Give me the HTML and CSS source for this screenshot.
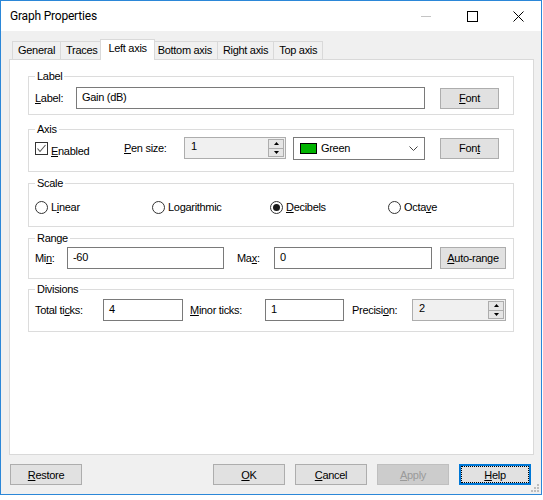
FILE: index.html
```html
<!DOCTYPE html>
<html>
<head>
<meta charset="utf-8">
<title>Graph Properties</title>
<link rel="stylesheet" href="styles.css">
</head>
<body>
<div class="window">
  <div class="titlebar">
    <span class="title">Graph Properties</span>
    <div class="caption">
      <div class="cap-btn"><svg width="10" height="10" viewBox="0 0 10 10"><line x1="0" y1="5.5" x2="10" y2="5.5" stroke="#c4c4c4" stroke-width="1"/></svg></div>
      <div class="cap-btn"><svg width="11" height="11" viewBox="0 0 11 11"><rect x="0.5" y="0.5" width="10" height="10" fill="none" stroke="#000" stroke-width="1"/></svg></div>
      <div class="cap-btn"><svg width="11" height="11" viewBox="0 0 11 11"><path d="M0.5 0.5 L10.5 10.5 M10.5 0.5 L0.5 10.5" stroke="#000" stroke-width="1" fill="none"/></svg></div>
    </div>
  </div>
  <div class="body">
    <div class="tabs">
      <div class="tab">General</div>
      <div class="tab">Traces</div>
      <div class="tab active">Left axis</div>
      <div class="tab">Bottom axis</div>
      <div class="tab">Right axis</div>
      <div class="tab">Top axis</div>
    </div>
    <div class="panel">
      <fieldset class="group g-label">
        <legend>Label</legend>
        <div class="row">
          <span class="lab w41"><u>L</u>abel:</span>
          <div class="field w349">Gain (dB)</div>
          <div class="btn w59 ml15"><u>F</u>ont</div>
        </div>
      </fieldset>
      <fieldset class="group g-axis">
        <legend>Axis</legend>
        <div class="row">
          <div class="check-wrap">
            <span class="checkbox"><svg width="11" height="11" viewBox="0 0 11 11"><polyline points="1.5,5.5 4,8.5 9.5,2" fill="none" stroke="#555" stroke-width="1.1"/></svg></span>
            <span class="check-text"><u>E</u>nabled</span>
          </div>
          <span class="lab w60"><u>P</u>en size:</span>
          <div class="spin w102">
            <span class="spin-val">1</span>
            <div class="spin-btns">
              <div class="sb"><svg width="5" height="3" viewBox="0 0 5 3"><polygon points="0,3 5,3 2.5,0" fill="#000"/></svg></div>
              <div class="sb"><svg width="5" height="3" viewBox="0 0 5 3"><polygon points="0,0 5,0 2.5,3" fill="#000"/></svg></div>
            </div>
          </div>
          <div class="combo">
            <span class="swatch"></span>
            <span>Green</span>
            <svg class="chev" width="9" height="5" viewBox="0 0 9 5"><polyline points="0.5,0.5 4.5,4.5 8.5,0.5" fill="none" stroke="#444" stroke-width="1"/></svg>
          </div>
          <div class="btn w59 ml15">Fon<u>t</u></div>
        </div>
      </fieldset>
      <fieldset class="group g-scale">
        <legend>Scale</legend>
        <div class="radio-row">
          <div class="radio-item"><span class="radio"></span><span>L<u>i</u>near</span></div>
          <div class="radio-item"><span class="radio"></span><span>Lo<u>g</u>arithmic</span></div>
          <div class="radio-item"><span class="radio on"></span><span><u>D</u>ecibels</span></div>
          <div class="radio-item"><span class="radio"></span><span>Octa<u>v</u>e</span></div>
        </div>
      </fieldset>
      <fieldset class="group g-range">
        <legend>Range</legend>
        <div class="row">
          <span class="lab w32">Mi<u>n</u>:</span>
          <div class="field w157">-60</div>
          <span class="lab w37 ml13">Ma<u>x</u>:</span>
          <div class="field w158">0</div>
          <div class="btn w66 h22 ml8"><u>A</u>uto-range</div>
        </div>
      </fieldset>
      <fieldset class="group g-div">
        <legend>Divisions</legend>
        <div class="row">
          <span class="lab w68">Total ti<u>c</u>ks:</span>
          <div class="field w80">4</div>
          <span class="lab w75 ml7"><u>M</u>inor ticks:</span>
          <div class="field w79">1</div>
          <span class="lab w60 ml8">Precisi<u>o</u>n:</span>
          <div class="spin w94">
            <span class="spin-val">2</span>
            <div class="spin-btns">
              <div class="sb"><svg width="5" height="3" viewBox="0 0 5 3"><polygon points="0,3 5,3 2.5,0" fill="#000"/></svg></div>
              <div class="sb"><svg width="5" height="3" viewBox="0 0 5 3"><polygon points="0,0 5,0 2.5,3" fill="#000"/></svg></div>
            </div>
          </div>
        </div>
      </fieldset>
    </div>
    <div class="buttons">
      <div class="btn w72"><u>R</u>estore</div>
      <div class="btn w72 push"><u>O</u>K</div>
      <div class="btn w72 ml10"><u>C</u>ancel</div>
      <div class="btn w72 ml10 disabled"><u>A</u>pply</div>
      <div class="btn w72 ml10 default"><u>H</u>elp</div>
    </div>
  </div>
  <svg class="grip" width="10" height="10" viewBox="0 0 10 10">
    <rect x="7" y="1" width="2" height="2" fill="#bdbdbd"/>
    <rect x="4" y="4" width="2" height="2" fill="#bdbdbd"/>
    <rect x="7" y="4" width="2" height="2" fill="#bdbdbd"/>
    <rect x="1" y="7" width="2" height="2" fill="#bdbdbd"/>
    <rect x="4" y="7" width="2" height="2" fill="#bdbdbd"/>
    <rect x="7" y="7" width="2" height="2" fill="#bdbdbd"/>
  </svg>
</div>
</body>
</html>
```

FILE: styles.css
```css
* { box-sizing: border-box; }

body {
  margin: 0;
  background: #ffffff;
  font-family: "Liberation Sans", Arial, sans-serif;
  font-size: 11px;
  letter-spacing: -0.3px;
  color: #000;
}

u { text-decoration: underline; text-underline-offset: 1px; }

.window {
  position: relative;
  width: 542px;
  height: 495px;
  border: 1px solid #2b87d8;
  background: #f0f0f0;
}

.titlebar {
  height: 30px;
  background: #fff;
  display: flex;
  align-items: center;
}

.title {
  font-family: Roboto, "Noto Sans", sans-serif;
  font-size: 12px;
  letter-spacing: -0.2px;
  margin-left: 9px;
  color: #000;
}

.caption { margin-left: auto; display: flex; }

.cap-btn {
  width: 46px;
  height: 30px;
  display: flex;
  align-items: center;
  justify-content: center;
}

.body { padding: 0 7px 0 8px; }

.tabs {
  display: flex;
  align-items: flex-end;
  height: 20px;
  margin-top: 8px;
  padding-left: 3px;
}

.tab {
  height: 18px;
  padding: 0 5px;
  border: 1px solid #d9d9d9;
  border-bottom: none;
  line-height: 17px;
  background: #f0f0f0;
  margin-left: -1px;
}

.tab:first-child { margin-left: 0; }

.tab.active {
  position: relative;
  z-index: 1;
  height: 21px;
  line-height: 17px;
  background: #fff;
  margin: 0 -2px -1px -3px;
  padding: 0 7px;
}

.panel {
  height: 396px;
  border: 1px solid #d9d9d9;
  background: #fff;
  padding: 10px 19px 0 18px;
}

.group {
  margin: 0;
  border: 1px solid #dcdcdc;
  min-width: 0;
}

.group legend {
  padding: 0 2px;
  height: 13px;
  line-height: 13px;
}

.g-label { padding: 4px 6px 5px; }
.g-axis { margin-top: 8px; padding: 1px 6px 12px; }
.g-scale { margin-top: 5px; padding: 9px 6px 11px; }
.g-range { margin-top: 5px; padding: 2px 6px 9px; }
.g-div { margin-top: 4px; padding: 3px 6px 10px; }

.row {
  display: flex;
  align-items: center;
  height: 22px;
}

.lab { flex: none; white-space: nowrap; }

.w32 { width: 32px; }
.w37 { width: 37px; }
.w41 { width: 41px; }
.w59 { width: 59px; }
.w60 { width: 60px; }
.w66 { width: 66px; }
.w68 { width: 68px; }
.w72 { width: 72px; }
.w75 { width: 75px; }
.w79 { width: 79px; }
.w80 { width: 80px; }
.w94 { width: 94px; }
.w102 { width: 102px; }
.w157 { width: 157px; }
.w158 { width: 158px; }
.w349 { width: 349px; }
.ml7 { margin-left: 7px; }
.ml8 { margin-left: 8px; }
.ml10 { margin-left: 10px; }
.ml13 { margin-left: 13px; }
.ml15 { margin-left: 15px; }

.field {
  flex: none;
  height: 22px;
  border: 1px solid #7a7a7a;
  background: #fff;
  padding: 0 5px;
  line-height: 19px;
}

.btn {
  flex: none;
  height: 21px;
  border: 1px solid #adadad;
  background: #e1e1e1;
  display: flex;
  align-items: center;
  justify-content: center;
}

.btn.h22 { height: 22px; }

.check-wrap {
  flex: none;
  width: 89px;
  height: 22px;
  display: flex;
  align-items: flex-start;
}

.checkbox {
  width: 13px;
  height: 13px;
  margin-top: 5px;
  border: 1px solid #333;
  background: #fff;
  display: flex;
  align-items: center;
  justify-content: center;
}

.check-text {
  margin-left: 3px;
  padding-top: 8px;
  line-height: 13px;
}

.spin {
  flex: none;
  display: flex;
  height: 22px;
  border: 1px solid #adadad;
  background: #f0f0f0;
}

.spin-val {
  flex: 1;
  padding-left: 6px;
  line-height: 17px;
}

.spin-btns {
  width: 17px;
  display: flex;
  flex-direction: column;
  padding: 1px 1px 1px 0;
}

.sb {
  flex: 1;
  border: 1px solid #adadad;
  background: #e6e6e6;
  display: flex;
  align-items: center;
  justify-content: center;
}

.sb + .sb { margin-top: -1px; }

.combo {
  flex: none;
  width: 132px;
  height: 23px;
  margin-left: 7px;
  border: 1px solid #7a7a7a;
  background: #fff;
  display: flex;
  align-items: center;
  padding-left: 6px;
}

.swatch {
  width: 17px;
  height: 11px;
  border: 1px solid #000;
  background: #00b300;
  margin-right: 4px;
}

.chev { margin-left: auto; margin-right: 6px; }

.radio-row {
  display: grid;
  grid-template-columns: 117px 118px 118px auto;
  height: 16px;
  align-items: center;
}

.radio-item { display: flex; align-items: center; }

.radio {
  width: 13px;
  height: 13px;
  border: 1px solid #333;
  border-radius: 50%;
  background: #fff;
  margin-right: 3px;
  display: flex;
  align-items: center;
  justify-content: center;
}

.radio.on::after {
  content: "";
  width: 7px;
  height: 7px;
  border-radius: 50%;
  background: #1a1a1a;
}

.buttons {
  display: flex;
  margin-top: 9px;
  padding: 0 3px 0 1px;
}

.push { margin-left: auto; }

.btn.disabled {
  background: #cccccc;
  border-color: #bfbfbf;
  color: #9a9a9a;
}

.btn.default {
  border-color: #0078d7;
  box-shadow: inset 0 0 0 1px #0078d7;
  outline: 1px dotted #000;
  outline-offset: -3px;
}

.grip {
  position: absolute;
  right: 1px;
  bottom: 1px;
}
```
